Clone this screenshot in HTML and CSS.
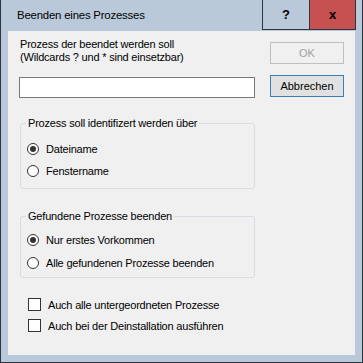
FILE: index.html
```html
<!DOCTYPE html>
<html lang="de">
<head>
    <meta charset="UTF-8">
    <title>Beenden eines Prozesses</title>
    <link rel="stylesheet" href="styles.css">
</head>
<body>
    <div class="window">
        <div class="titlebar">
            <span class="title">Beenden eines Prozesses</span>
            <span class="tb-btn tb-help">?</span>
            <span class="tb-btn tb-close">x</span>
        </div>
        <div class="client">
            <div class="main">
                <label class="prompt">Prozess der beendet werden soll<br>(Wildcards ? und * sind einsetzbar)</label>
                <input class="pattern" type="text">

                <fieldset class="group group-ident">
                    <legend>Prozess soll identifizert werden über</legend>
                    <div class="option"><span class="radio checked"></span>Dateiname</div>
                    <div class="option"><span class="radio"></span>Fenstername</div>
                </fieldset>

                <fieldset class="group group-found">
                    <legend>Gefundene Prozesse beenden</legend>
                    <div class="option"><span class="radio checked"></span>Nur erstes Vorkommen</div>
                    <div class="option"><span class="radio"></span>Alle gefundenen Prozesse beenden</div>
                </fieldset>

                <div class="checks">
                    <div class="option"><span class="check"></span>Auch alle untergeordneten Prozesse</div>
                    <div class="option"><span class="check"></span>Auch bei der Deinstallation ausführen</div>
                </div>
            </div>
            <div class="side">
                <button class="btn" disabled>OK</button>
                <button class="btn btn-default">Abbrechen</button>
            </div>
        </div>
    </div>
</body>
</html>
```

FILE: styles.css
```css
body { margin: 0; padding: 0; font-family: "Liberation Sans", Arial, sans-serif; font-size: 11px; letter-spacing: -0.2px; color: #000; }
.window { width: 363px; height: 363px; box-sizing: border-box; background-color: #b9c9da; border: 1px solid #2f353e; border-top: none; padding: 0 7px 7px 7px; display: flex; flex-direction: column; }
.titlebar { height: 31px; display: flex; align-items: flex-start; margin-right: -1px; }
.title { flex: 1; padding-left: 9px; line-height: 30px; font-size: 11.4px; }
.tb-btn { height: 30px; box-sizing: border-box; border-bottom: 1px solid #2f353e; border-right: 1px solid #2f353e; text-align: center; line-height: 29px; font-weight: bold; font-size: 13px; letter-spacing: 0; }
.tb-help { width: 48px; border-left: 1px solid #2f353e; }
.tb-close { width: 46px; background-color: #c75050; }
.client { flex: 1; background-color: #f0f0f0; display: flex; padding-top: 7px; }
.main { width: 236px; margin-left: 11px; display: flex; flex-direction: column; }
.prompt { line-height: 13px; padding-left: 1px; }
.pattern { margin: 13px 0 0 0; height: 21px; box-sizing: border-box; border: 1px solid #7a7a7a; background-color: #fff; padding: 0 3px; font: inherit; outline: none; }
.group { margin: 19px 0 0 1px; padding: 0 0 6px 0; border: 1px solid #d7dde2; border-radius: 3px; }
.group legend { margin-left: 5px; padding: 0 2px; line-height: 13px; }
.group-ident { padding-top: 8px; padding-bottom: 6px; }
.group-found { margin-top: 21px; padding-top: 5px; padding-bottom: 3px; }
.group-found .option { height: 23px; }
.option { height: 22px; display: flex; align-items: center; padding-left: 6px; }
.radio { width: 12px; height: 12px; box-sizing: border-box; border: 1px solid #333; border-radius: 50%; background-color: #fff; margin-right: 7px; display: flex; align-items: center; justify-content: center; }
.radio.checked::after { content: ""; width: 6px; height: 6px; border-radius: 50%; background-color: #333; }
.checks { margin-top: 16px; }
.checks .option { height: 21px; padding-left: 9px; }
.check { width: 13px; height: 13px; box-sizing: border-box; border: 1px solid #333; background-color: #fff; margin-right: 7px; }
.side { width: 74px; margin-left: 15px; padding-top: 4px; display: flex; flex-direction: column; gap: 11px; }
.btn { height: 22px; box-sizing: border-box; font: inherit; font-size: 11px; padding: 0; border: 1px solid #adadad; background-color: #e1e1e1; color: #000; }
.btn:disabled { border-color: #bfbfbf; background-color: #f0f0f0; color: #a0a0a0; }
.btn-default { border-color: #3c7fb1; }
```
